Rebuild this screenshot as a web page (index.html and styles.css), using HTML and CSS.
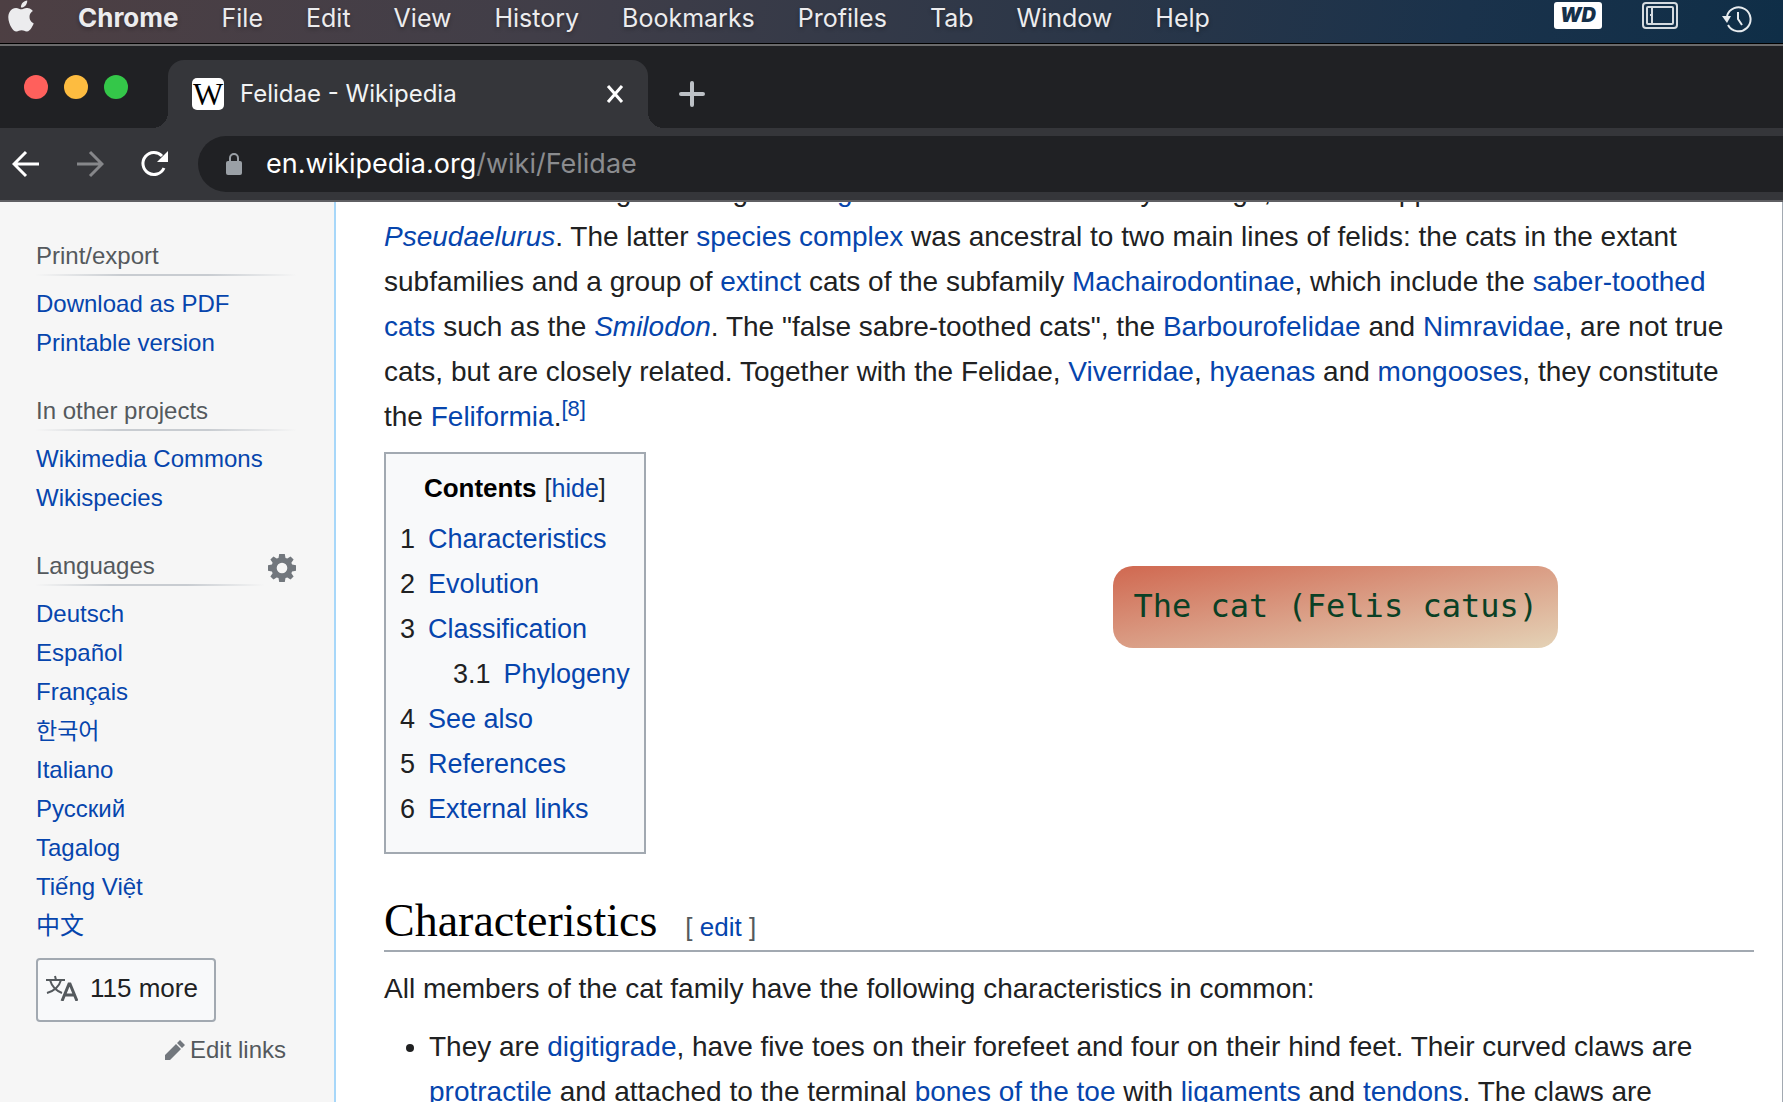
FILE: index.html
```html
<!DOCTYPE html>
<html lang="en">
<head>
<meta charset="utf-8">
<meta name="viewport" content="width=device-width, initial-scale=1">
<title>Felidae - Wikipedia</title>
<link rel="stylesheet" href="styles.css">
</head>
<body>
<div class="screen">
  <nav class="menubar" aria-label="Menu bar">
    <svg class="apple" viewBox="2 0 20 24" aria-hidden="true"><path d="M12.152 6.896c-.948 0-2.415-1.078-3.96-1.04-2.04.027-3.91 1.183-4.961 3.014-2.117 3.675-.546 9.103 1.519 12.09 1.013 1.454 2.208 3.09 3.792 3.039 1.52-.065 2.09-.987 3.935-.987 1.831 0 2.35.987 3.96.948 1.637-.026 2.676-1.48 3.676-2.948 1.156-1.688 1.636-3.325 1.662-3.415-.039-.013-3.182-1.221-3.22-4.857-.026-3.04 2.48-4.494 2.597-4.559-1.429-2.09-3.623-2.324-4.39-2.376-2-.156-3.675 1.09-4.61 1.09zM15.53 3.83c.843-1.012 1.4-2.427 1.245-3.83-1.207.052-2.662.805-3.532 1.818-.78.896-1.454 2.338-1.273 3.714 1.338.104 2.715-.688 3.559-1.701"/></svg>
    <div class="menus">
      <button class="menu app">Chrome</button>
      <button class="menu">File</button>
      <button class="menu">Edit</button>
      <button class="menu">View</button>
      <button class="menu">History</button>
      <button class="menu">Bookmarks</button>
      <button class="menu">Profiles</button>
      <button class="menu">Tab</button>
      <button class="menu">Window</button>
      <button class="menu">Help</button>
    </div>
    <div class="status">
      <span class="wd">WD</span>
      <svg class="tray" width="36" height="27" viewBox="0 0 36 27" aria-hidden="true"><rect x="1" y="1" width="34" height="25" rx="3"/><rect x="5" y="5" width="26" height="17" rx="1"/><path d="M10 5v17M8 13h2"/></svg>
      <svg class="clock" width="30" height="28" viewBox="0 0 30 28" aria-hidden="true"><path d="M5 11A12 12 0 1 1 6 20M16 7v7l4 6"/><path class="solid" d="M0 11h9l-4 7z"/></svg>
    </div>
  </nav>

  <div class="tabstrip">
    <div class="lights"><i class="red"></i><i class="amber"></i><i class="green"></i></div>
    <div class="tab">
      <span class="favicon">W</span>
      <span class="tab-title">Felidae - Wikipedia</span>
      <button class="icon-btn" aria-label="Close tab"><svg width="18" height="18" viewBox="0 0 18 18"><path d="M2 1l14 16M16 1L2 17" stroke="#fff" stroke-width="3"/></svg></button>
    </div>
    <button class="icon-btn new-tab" aria-label="New tab"><svg width="28" height="28" viewBox="0 0 28 28"><path d="M14 3v22M3 14h22" stroke="#bdc1c6" stroke-width="4" stroke-linecap="round"/></svg></button>
  </div>

  <div class="toolbar">
    <button class="icon-btn" aria-label="Back"><svg width="28" height="28" viewBox="0 0 28 28"><path d="M27 14H3M14 2L2 14l12 12" stroke="#fff" stroke-width="3" fill="none"/></svg></button>
    <button class="icon-btn" aria-label="Forward"><svg width="28" height="28" viewBox="0 0 28 28"><path d="M1 14h24M14 2l12 12-12 12" stroke="#86878a" stroke-width="3" fill="none"/></svg></button>
    <button class="icon-btn" aria-label="Reload"><svg width="28" height="28" viewBox="0 0 28 28"><path d="M24 18A11 11 0 1 1 22 6" stroke="#fff" stroke-width="3" fill="none"/><path d="M28 1v11H17z" fill="#fff"/></svg></button>
    <div class="omnibox">
      <svg width="16" height="22" viewBox="0 0 16 22" aria-hidden="true"><path d="M4 9V5a4 4 0 0 1 8 0v4" stroke="#9aa0a6" stroke-width="2" fill="none"/><rect y="8" width="16" height="14" rx="2" fill="#9aa0a6"/></svg>
      <span class="url">en.wikipedia.org<span class="path">/wiki/Felidae</span></span>
    </div>
  </div>

  <div class="page">
    <aside class="sidebar">
      <section class="portal">
        <h3>Print/export</h3>
        <ul>
          <li><a href="#">Download as PDF</a></li>
          <li><a href="#">Printable version</a></li>
        </ul>
      </section>
      <section class="portal">
        <h3>In other projects</h3>
        <ul>
          <li><a href="#">Wikimedia Commons</a></li>
          <li><a href="#">Wikispecies</a></li>
        </ul>
      </section>
      <section class="portal">
        <div class="lang-head">
          <h3>Languages</h3>
          <button class="icon-btn" aria-label="Language settings"><svg width="28" height="28" viewBox="0 0 20 20"><path fill="#72777d" fill-rule="evenodd" d="M8 0h4l.5 2.8 1.300.500L16.100 1.700 18.300 3.900 16.700 6.200l.5 1.300L20 8v4l-2.800.500-.5 1.300 1.600 2.300-2.200 2.200-2.300-1.600-1.300.5L12 20H8l-.5-2.800-1.300-.5-2.300 1.600-2.200-2.200 1.600-2.300-.5-1.300L0 12V8l2.800-.5.500-1.300L1.700 3.900 3.900 1.700l2.300 1.600 1.300-.5zM10 6.200a3.800 3.800 0 1 0 0 7.600 3.800 3.800 0 0 0 0-7.600z"/></svg></button>
        </div>
        <ul>
          <li><a href="#">Deutsch</a></li>
          <li><a href="#">Español</a></li>
          <li><a href="#">Français</a></li>
          <li><a href="#" lang="ko">한국어</a></li>
          <li><a href="#">Italiano</a></li>
          <li><a href="#">Русский</a></li>
          <li><a href="#">Tagalog</a></li>
          <li><a href="#">Tiếng Việt</a></li>
          <li><a href="#" lang="zh">中文</a></li>
        </ul>
        <button class="more"><svg width="32" height="26" viewBox="0 0 32 26" fill="none" stroke="#54595d" stroke-width="2" aria-hidden="true"><path d="M0 5h19M9 1l1 4M4 5c2 7 7 11 12 13M15 5c-2 7-7 11-14 13"/><path stroke-width="3" d="M16 26l7-17h1l7 17M18 20h11"/></svg>115 more</button>
        <div class="edit-links"><a href="#"><svg width="20" height="20" viewBox="0 0 20 20" aria-hidden="true"><path fill="#72777d" d="M0 20v-5L11 4l5 5L5 20zM12 3l3-3 5 5-3 3z"/></svg>Edit links</a></div>
      </section>
    </aside>

    <main class="content">
      <p class="lead">The first cats emerged during the <a href="#">Oligocene</a> about <a href="#">25 million</a> years ago, with the appearance of <i><a href="#">Proailurus</a></i> and<br>
      <i><a href="#">Pseudaelurus</a></i>. The latter <a href="#">species complex</a> was ancestral to two main lines of felids: the cats in the extant<br>
      subfamilies and a group of <a href="#">extinct</a> cats of the subfamily <a href="#">Machairodontinae</a>, which include the <a href="#">saber-toothed<br>
      cats</a> such as the <i><a href="#">Smilodon</a></i>. The "false sabre-toothed cats", the <a href="#">Barbourofelidae</a> and <a href="#">Nimravidae</a>, are not true<br>
      cats, but are closely related. Together with the Felidae, <a href="#">Viverridae</a>, <a href="#">hyaenas</a> and <a href="#">mongooses</a>, they constitute<br>
      the <a href="#">Feliformia</a>.<sup><a href="#">[8]</a></sup></p>
      <div class="toc-row">
        <nav class="toc" aria-label="Contents">
          <div class="toc-title"><h2>Contents</h2> <span class="toggle">[<a href="#">hide</a>]</span></div>
          <ul>
            <li><span>1</span><a href="#">Characteristics</a></li>
            <li><span>2</span><a href="#">Evolution</a></li>
            <li><span>3</span><a href="#">Classification</a></li>
            <li class="sub"><span>3.1</span><a href="#">Phylogeny</a></li>
            <li><span>4</span><a href="#">See also</a></li>
            <li><span>5</span><a href="#">References</a></li>
            <li><span>6</span><a href="#">External links</a></li>
          </ul>
        </nav>
        <div class="caption">The cat (Felis catus)</div>
      </div>
      <div class="section-head"><h2>Characteristics</h2><span class="edit">[ <a href="#">edit</a> ]</span></div>
      <p class="intro">All members of the cat family have the following characteristics in common:</p>
      <ul class="traits">
        <li>They are <a href="#">digitigrade</a>, have five toes on their forefeet and four on their hind feet. Their curved claws are<br>
        <a href="#">protractile</a> and attached to the terminal <a href="#">bones of the toe</a> with <a href="#">ligaments</a> and <a href="#">tendons</a>. The claws are</li>
      </ul>
    </main>
  </div>
</div>
</body>
</html>
```

FILE: styles.css
```css
* { box-sizing: border-box; }
body { margin: 0; }
button { border: 0; background: none; padding: 0; font: inherit; color: inherit; }
h2, h3, p, ul { margin: 0; padding: 0; font-weight: normal; }
ul { list-style: none; }
a { color: #0645ad; text-decoration: none; }
svg { display: block; }

.screen {
  height: 100vh;
  overflow: hidden;
  display: flex;
  flex-direction: column;
  font-family: "Liberation Sans", "Noto Sans CJK KR", "Noto Sans CJK SC", sans-serif;
}

/* macOS menu bar */
.menubar {
  flex: none;
  height: 44px;
  display: flex;
  align-items: flex-start;
  padding-left: 8px;
  padding-right: 31px;
  background: linear-gradient(100deg, #4d3f43 0%, #413e48 30%, #2a3648 62%, #1a324b 82%, #0f2e47 100%);
  border-bottom: 1px solid #000;
  color: #ececee;
  font: 25px/36px Inter, sans-serif;
}
.apple { width: 26px; height: 32px; fill: #ececee; }
.menus { display: flex; gap: 43px; margin-left: 44px; }
.menu { text-shadow: 0 2px 4px rgba(0, 0, 0, .3); }
.app { font-size: 26px; font-weight: 700; }
.status { display: flex; gap: 40px; margin-left: auto; padding-top: 2px; }
.wd {
  width: 48px;
  height: 27px;
  border-radius: 3px;
  background: #fff;
  color: #15304a;
  font: italic 900 20px/27px Inter, sans-serif;
  text-align: center;
}
.tray { fill: none; stroke: #d5dbe0; stroke-width: 2; }
.clock { fill: none; stroke: #e8ecef; stroke-width: 2; margin: 3px 0 0 4px; }
.clock .solid { fill: #e8ecef; stroke: none; }

/* Browser frame */
.tabstrip {
  flex: none;
  display: flex;
  height: 84px;
  padding: 14px 0 0 24px;
  background: #202124;
  border-top: 2px solid #6a6a6b;
}
.lights { display: flex; gap: 16px; padding-top: 15px; margin-right: 40px; }
.lights i { width: 24px; height: 24px; border-radius: 50%; }
.red { background: #ff605c; }
.amber { background: #fdbc40; }
.green { background: #34c749; }
.tab {
  position: relative;
  width: 480px;
  display: flex;
  align-items: center;
  padding: 0 24px;
  background: #35363a;
  border-radius: 16px 16px 0 0;
}
.tab::before, .tab::after {
  content: "";
  position: absolute;
  bottom: 0;
  width: 16px;
  height: 16px;
}
.tab::before { right: 100%; background: radial-gradient(circle at 0 0, #202124 16px, #35363a 16px); }
.tab::after { left: 100%; background: radial-gradient(circle at 100% 0, #202124 16px, #35363a 16px); }
.favicon {
  width: 32px;
  height: 32px;
  border-radius: 5px;
  background: #fff;
  color: #000;
  font: 32px/32px "Liberation Serif", serif;
  text-align: center;
}
.tab-title { flex: 1; margin-left: 16px; color: #f1f3f4; font: 24px/32px Inter, sans-serif; }
.icon-btn { display: flex; align-items: center; }
.new-tab { margin-left: 30px; }
.toolbar {
  flex: none;
  display: flex;
  gap: 36px;
  height: 74px;
  padding: 8px 0 8px 12px;
  background: #35363a;
  border-bottom: 2px solid #5f5f63;
}
.omnibox {
  flex: 1;
  display: flex;
  align-items: center;
  gap: 24px;
  margin-left: -6px;
  padding-left: 28px;
  background: #202124;
  border-radius: 28px 0 0 28px;
}
.url { color: #fff; font: 27px/32px Inter, sans-serif; }
.path { color: #8b8c8f; }

/* Wiki page */
.page {
  flex: 1;
  min-height: 0;
  overflow: hidden;
  display: flex;
  background: #fff;
  border-right: 1px solid #a2a9b1;
}
.sidebar {
  flex: none;
  width: 336px;
  padding: 38px 38px 0 36px;
  background: #f6f6f6;
  border-right: 2px solid #a7d7f9;
  font-size: 24px;
  line-height: 27px;
}
.portal { margin-bottom: 33px; }
.portal h3 {
  padding: 2px 0 5px;
  font-size: 24px;
  color: #54595d;
  border-bottom: 2px solid;
  border-image: linear-gradient(to right, rgba(200, 204, 209, 0), #c8ccd1 33%, #c8ccd1 66%, rgba(200, 204, 209, 0)) 1;
}
.portal ul { padding-top: 8px; }
.portal li { padding: 6px 0; height: 39px; }
.portal [lang="ko"] { font-size: 23px; }
.lang-head { display: flex; gap: 4px; }
.lang-head h3 { flex: 1; }
.more {
  display: flex;
  align-items: center;
  gap: 12px;
  height: 64px;
  margin-top: 13px;
  padding: 0 16px 4px 8px;
  background: #f8f9fa;
  border: 2px solid #a2a9b1;
  border-radius: 4px;
  color: #202122;
  font-size: 26px;
}
.edit-links { display: flex; justify-content: flex-end; padding: 14px 10px 0 0; }
.edit-links a { display: flex; align-items: center; gap: 5px; color: #54595d; }

.content {
  flex: 1;
  padding: 0 28px 0 48px;
  color: #202122;
  font-size: 28px;
  line-height: 45px;
}
.lead { margin-top: -33px; white-space: nowrap; }
sup { font-size: 22px; line-height: 1; }
.toc-row { display: flex; justify-content: space-between; align-items: flex-start; margin-top: 13px; }
.toc {
  padding: 12px 14px 20px;
  background: #f8f9fa;
  border: 2px solid #a2a9b1;
  font-size: 27px;
}
.toc-title { display: flex; justify-content: center; gap: 8px; margin-bottom: 6px; }
.toc-title h2 { color: #000; font-size: 26px; font-weight: bold; }
.toggle { font-size: 25px; }
.toc li { display: flex; gap: 13px; }
.toc .sub { padding-left: 53px; }
.caption {
  margin: 114px 196px 0 0;
  padding: 16px 20px 18px;
  border-radius: 20px;
  background: linear-gradient(to bottom right, #d06850, #d99880 45%, #e4d2b6);
  color: #0a4025;
  font: 32px/48px "DejaVu Sans Mono", monospace;
}
.section-head {
  display: flex;
  align-items: baseline;
  gap: 28px;
  margin-top: 39px;
  border-bottom: 2px solid #a2a9b1;
}
.section-head h2 { color: #000; font: 46px/56px "Liberation Serif", serif; }
.edit { color: #54595d; font-size: 26px; }
.intro { margin-top: 14px; }
.traits { margin: 13px 0 0; padding-left: 45px; list-style: disc; white-space: nowrap; }
```
